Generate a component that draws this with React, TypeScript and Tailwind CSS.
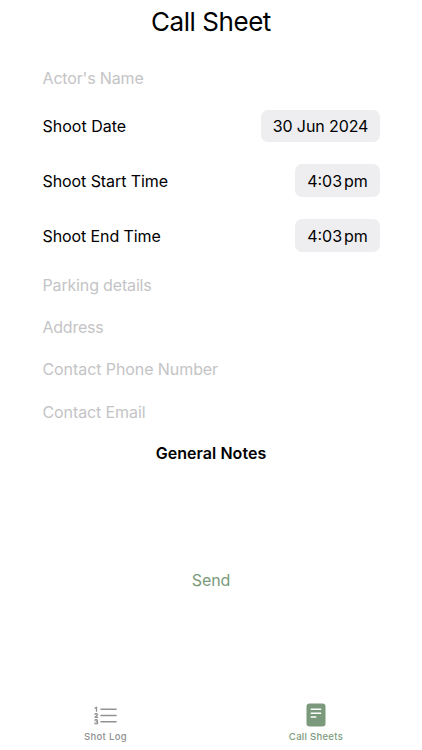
import type { ReactNode } from "react";

function Placeholder({ children, className }: { children: ReactNode; className: string }) {
  return <div className={"whitespace-nowrap text-[#c4c4c6] " + className}>{children}</div>;
}

function TimeRow({ label, className }: { label: string; className: string }) {
  return (
    <div className="mt-[22px] flex h-[33px] items-center justify-between">
      <span className={className}>{label}</span>
      <button className="flex h-[33px] w-[85px] items-center justify-center rounded-[7px] bg-[#eeeef0]">
        <span>4:03</span>
        <span className="ml-[2px]">pm</span>
      </button>
    </div>
  );
}

function ListNumberIcon() {
  return (
    <svg width="24" height="20" viewBox="0 0 24 20" fill="none" stroke="#929292" strokeLinecap="round">
      <path d="M7 4.2H22M7 10.5H22M7 16.8H22" strokeWidth="1.6" />
      <path
        d="M1.1 3.1L2.5 2.2V6.2M0.9 9.3C1.2 8.2 3.5 8.3 3.5 9.6C3.5 10.5 2 11.1 1 12.3H3.7M0.9 15.2C1.4 14.4 3.5 14.6 3.5 15.7C3.5 16.4 2.8 16.7 2 16.7C2.9 16.7 3.7 17 3.7 17.8C3.7 19.1 1.3 19.2 0.8 18.2"
        strokeWidth="1.3"
        strokeLinejoin="round"
      />
    </svg>
  );
}

function DocumentIcon() {
  return (
    <svg width="20" height="24" viewBox="0 0 20 24" fill="none" className="mr-[1px]">
      <rect x="0.5" y="0.5" width="19" height="23" rx="3" fill="#7b9a7b" />
      <path d="M5.2 6.3H14.7M5.2 10.2H14.7M5.2 14H9.8" stroke="white" strokeWidth="1.4" strokeLinecap="round" />
    </svg>
  );
}

export default function App() {
  return (
    <main className="flex h-[750px] w-[422px] flex-col overflow-hidden bg-white font-['Inter',sans-serif] text-[16px] leading-[24px] text-black">
      <h1 className="mt-[4px] text-center text-[26px] leading-[36px] tracking-[-0.45px]">Call Sheet</h1>
      <section className="flex flex-col pr-[42px] pl-[42.5px]">
        <Placeholder className="mt-[26px] tracking-[-0.16px]">Actor's Name</Placeholder>
        <div className="mt-[20px] flex h-[32px] items-center justify-between">
          <span>Shoot Date</span>
          <button className="flex h-[32px] w-[119px] items-center justify-center rounded-[7px] bg-[#eeeef0] tracking-[-0.1px]">30 Jun 2024</button>
        </div>
        <TimeRow label="Shoot Start Time" className="tracking-[-0.08px]" />
        <TimeRow label="Shoot End Time" className="tracking-[-0.1px]" />
        <Placeholder className="mt-[21px] tracking-[-0.16px]">Parking details</Placeholder>
        <Placeholder className="mt-[18px] tracking-[-0.25px]">Address</Placeholder>
        <Placeholder className="mt-[18px] tracking-[-0.08px]">Contact Phone Number</Placeholder>
        <Placeholder className="mt-[19px] tracking-[-0.1px]">Contact Email</Placeholder>
      </section>
      <h2 className="mt-[17px] text-center font-semibold tracking-[0.05px]">General Notes</h2>
      <button className="mt-[103px] self-center tracking-[-0.1px] text-[#7b9a7b]">Send</button>
      <nav className="mt-auto flex h-[47px] text-[9.5px] leading-[12px] font-medium">
        <button className="flex w-[211px] flex-col items-center pt-[2px] tracking-[0.3px] text-[#929292]">
          <ListNumberIcon />
          <span className="mt-[6px]">Shot Log</span>
        </button>
        <button className="flex w-[211px] flex-col items-center text-[#7b9a7b]">
          <DocumentIcon />
          <span className="mt-[4px] mr-[1px] tracking-[0.3px]">Call Sheets</span>
        </button>
      </nav>
    </main>
  );
}
